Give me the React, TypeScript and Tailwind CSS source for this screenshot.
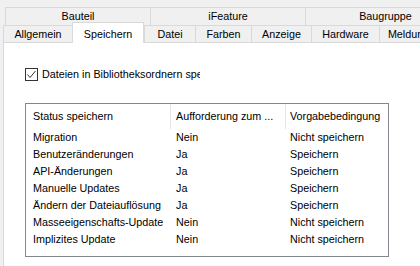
import React from "react";

const row1 = [
  { label: "Bauteil", w: 145 },
  { label: "iFeature", w: 155 },
  { label: "Baugruppe", w: 160 },
];

const row2 = [
  { label: "Allgemein", w: 69 },
  { label: "Speichern", w: 72, active: true },
  { label: "Datei", w: 51 },
  { label: "Farben", w: 56 },
  { label: "Anzeige", w: 60 },
  { label: "Hardware", w: 68 },
  { label: "Meldungen", w: 70 },
];

const rows = [
  ["Migration", "Nein", "Nicht speichern"],
  ["Benutzeränderungen", "Ja", "Speichern"],
  ["API-Änderungen", "Ja", "Speichern"],
  ["Manuelle Updates", "Ja", "Speichern"],
  ["Ändern der Dateiauflösung", "Ja", "Speichern"],
  ["Masseeigenschafts-Update", "Nein", "Nicht speichern"],
  ["Implizites Update", "Nein", "Nicht speichern"],
];

export default function App() {
  return (
    <div
      className="w-[420px] h-[266px] overflow-hidden bg-[#f0f0f0] text-[10.75px] text-black flex flex-col"
      style={{ fontFamily: '"Liberation Sans", Arial, sans-serif' }}
    >
      {/* tab row 1 */}
      <div className="flex mt-[7px] ml-[5px] h-[18px] shrink-0">
        {row1.map((t) => (
          <div
            key={t.label}
            className="shrink-0 h-full flex items-center justify-center border-t border-l border-[#d9d9d9] bg-[#f0f0f0]"
            style={{ width: t.w }}
          >
            {t.label}
          </div>
        ))}
      </div>
      {/* tab row 2 */}
      <div className="flex ml-[3px] h-[17px] shrink-0 items-end relative z-10 border-t border-[#d9d9d9]">
        {row2.map((t) =>
          t.active ? (
            <div
              key={t.label}
              className="shrink-0 h-[21px] -mb-[1px] flex items-start pt-[3px] justify-center bg-white border-t border-l border-r border-[#d9d9d9]"
              style={{ width: t.w }}
            >
              {t.label}
            </div>
          ) : (
            <div
              key={t.label}
              className="shrink-0 h-full flex items-center justify-center border-l border-[#d9d9d9] bg-[#f0f0f0] pt-[1px]"
              style={{ width: t.w }}
            >
              {t.label}
            </div>
          )
        )}
      </div>
      {/* panel */}
      <div className="flex-1 ml-[3px] bg-white border-t border-l border-[#d9d9d9] pl-[21px] pt-[25px]">
        <div className="flex items-center h-[13px]">
          <svg width="13" height="13" viewBox="0 0 13 13" className="shrink-0">
            <rect x="0.5" y="0.5" width="12" height="12" fill="#fff" stroke="#333" />
            <polyline points="2.5,6.5 5,9.5 10.5,3" fill="none" stroke="#333" strokeWidth="1" />
          </svg>
          <div className="ml-[4px] w-[158px] overflow-hidden whitespace-nowrap">
            Dateien in Bibliotheksordnern speichern
          </div>
        </div>
        <div className="mt-[22px] w-[364px] h-[154px] border border-[#828790] flex flex-col">
          <div className="flex h-[25px] shrink-0">
            <div className="w-[145px] shrink-0 pl-[7px] flex items-center border-r border-[#e5e5e5]">
              Status speichern
            </div>
            <div className="w-[115px] shrink-0 pl-[5px] flex items-center border-r border-[#e5e5e5] whitespace-nowrap overflow-hidden">
              Aufforderung zum ...
            </div>
            <div className="flex-1 pl-[4px] flex items-center whitespace-nowrap">
              Vorgabebedingung
            </div>
          </div>
          {rows.map((r) => (
            <div key={r[0]} className="flex h-[17px] items-center whitespace-nowrap">
              <div className="w-[145px] shrink-0 pl-[7px]">{r[0]}</div>
              <div className="w-[116px] shrink-0 pl-[5px]">{r[1]}</div>
              <div className="flex-1 pl-[3px]">{r[2]}</div>
            </div>
          ))}
        </div>
      </div>
    </div>
  );
}
